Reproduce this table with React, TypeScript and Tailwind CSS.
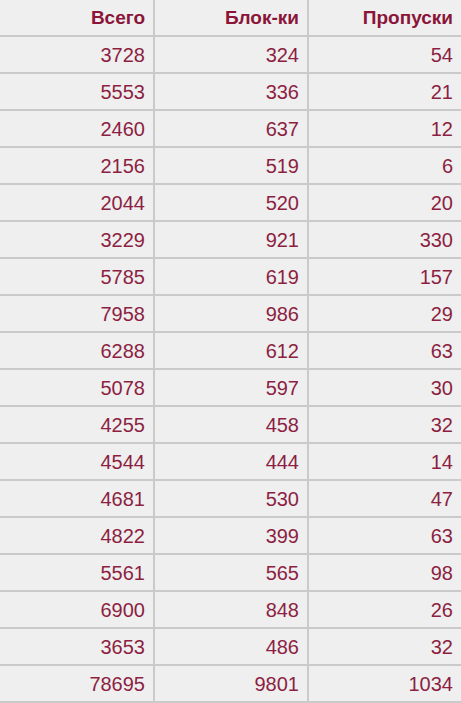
const rows: [string, string, string][] = [
  ['3728', '324', '54'],
  ['5553', '336', '21'],
  ['2460', '637', '12'],
  ['2156', '519', '6'],
  ['2044', '520', '20'],
  ['3229', '921', '330'],
  ['5785', '619', '157'],
  ['7958', '986', '29'],
  ['6288', '612', '63'],
  ['5078', '597', '30'],
  ['4255', '458', '32'],
  ['4544', '444', '14'],
  ['4681', '530', '47'],
  ['4822', '399', '63'],
  ['5561', '565', '98'],
  ['6900', '848', '26'],
  ['3653', '486', '32'],
  ['78695', '9801', '1034'],
];

const Row = ({ cells, head }: { cells: string[]; head?: boolean }) => (
  <div className="grid grid-cols-[155px_154px_152px] border-b-2 border-[#cacaca]">
    {cells.map((c, i) => (
      <div
        key={i}
        className={`h-[35px] flex items-center justify-end pr-2 ${i < 2 ? 'border-r-2 border-[#cacaca]' : ''} ${head ? 'font-bold text-[19px] text-[#8a1538]' : 'text-[20px] text-[#8c1f42]'}`}
      >
        {c}
      </div>
    ))}
  </div>
);

export default function App() {
  return (
    <div className="w-[461px] h-[703px] bg-[#efefef] leading-none font-['Liberation_Sans',Arial,sans-serif]">
      <Row cells={['Всего', 'Блок-ки', 'Пропуски']} head />
      {rows.map((r, i) => (
        <Row key={i} cells={r} />
      ))}
    </div>
  );
}
